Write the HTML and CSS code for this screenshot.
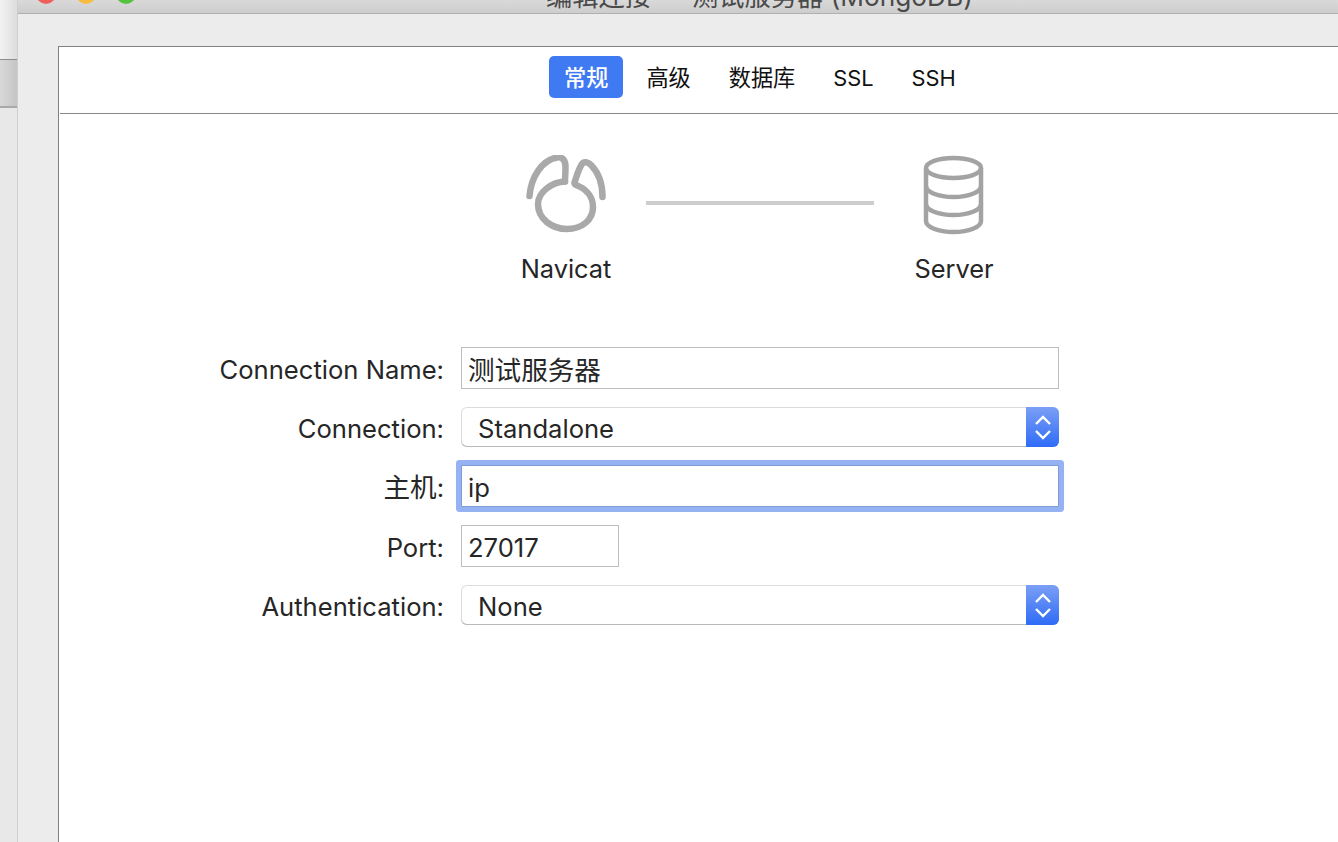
FILE: index.html
```html
<!DOCTYPE html>
<html lang="zh">
<head>
<meta charset="utf-8">
<title>编辑连接 — 测试服务器 (MongoDB)</title>
<link rel="stylesheet" href="styles.css">
</head>
<body>
<div class="desktop">
  <aside class="behind">
    <div class="behind-top"></div>
    <div class="behind-mid"></div>
    <div class="behind-low"></div>
  </aside>
  <div class="window">
    <header class="titlebar">
      <div class="lights">
        <span class="light red"></span>
        <span class="light yellow"></span>
        <span class="light green"></span>
      </div>
      <div class="wintitle">编辑连接 — 测试服务器 (MongoDB)</div>
    </header>
    <div class="body">
      <main class="panel">
        <nav class="tabs">
          <span class="tab active">常规</span>
          <span class="tab">高级</span>
          <span class="tab">数据库</span>
          <span class="tab latin">SSL</span>
          <span class="tab latin">SSH</span>
        </nav>
        <section class="diagram">
          <div class="node node-left">
            <svg class="icon" width="84" height="80" viewBox="0 0 84 80" fill="none" stroke="#a9a9a9" stroke-width="6.5" stroke-linecap="round" stroke-linejoin="round">
              <path d="M5.5 41C7 22 18 5 33 2.5C39 1.5 41.5 6 41.5 12C41.5 18 41 22 41 26.5"/>
              <path d="M41 26.5C28 27 14 37 14 49C14 64 28 74 43 74C58 74 69 65 69 52C69 40 60 33 52 30C50 29 50 28 51 26C53 20 55 13 58 9C60 6 64 7 67 10C73 16 78.5 27 78.5 42"/>
            </svg>
            <div class="node-label">Navicat</div>
          </div>
          <div class="link"></div>
          <div class="node node-right">
            <svg class="icon" width="62" height="80" viewBox="0 0 62 80" fill="none" stroke="#a3a3a3" stroke-width="4.5">
              <ellipse cx="30.5" cy="13" rx="27.5" ry="10"/>
              <path d="M3 13V66C3 72 15 77 30.5 77C46 77 58 72 58 66V13"/>
              <path d="M3 31C3 37 15 42 30.5 42C46 42 58 37 58 31"/>
              <path d="M3 49C3 55 15 60 30.5 60C46 60 58 55 58 49"/>
            </svg>
            <div class="node-label">Server</div>
          </div>
        </section>
        <form class="form">
          <div class="row">
            <label class="label">Connection Name:</label>
            <div class="field full"><span class="cjk">测试服务器</span></div>
          </div>
          <div class="row">
            <label class="label">Connection:</label>
            <div class="select">
              <span class="select-text">Standalone</span>
              <span class="stepper"><svg width="18" height="28" viewBox="0 0 18 28" fill="none" stroke="#fff" stroke-width="2.4"><path d="M2 11L9 4L16 11"/><path d="M2 18L9 25L16 18"/></svg></span>
            </div>
          </div>
          <div class="row">
            <label class="label"><span class="cjk">主机</span>:</label>
            <div class="field full focus">ip</div>
          </div>
          <div class="row">
            <label class="label">Port:</label>
            <div class="field port">27017</div>
          </div>
          <div class="row">
            <label class="label">Authentication:</label>
            <div class="select">
              <span class="select-text">None</span>
              <span class="stepper"><svg width="18" height="28" viewBox="0 0 18 28" fill="none" stroke="#fff" stroke-width="2.4"><path d="M2 11L9 4L16 11"/><path d="M2 18L9 25L16 18"/></svg></span>
            </div>
          </div>
        </form>
      </main>
    </div>
  </div>
</div>
</body>
</html>
```
FILE: styles.css
```css
* { box-sizing: border-box; }
html, body { margin: 0; height: 100%; overflow: hidden; }
body {
  font-family: "Inter", "Noto Sans CJK SC", sans-serif;
  color: #262626;
  background: #ececec;
}
.desktop { display: flex; width: 1338px; height: 842px; }

.behind { width: 18px; flex: none; display: flex; flex-direction: column; background: #e9e9e9; border-right: 1px solid #cfcfcf; }
.behind-top { height: 60px; background: linear-gradient(90deg, #f2f2f2, #dddddd); border-bottom: 1px solid #8d8d8d; }
.behind-mid { height: 48px; background: linear-gradient(90deg, #d9d9d9, #c4c4c4); border-bottom: 2px solid #a9a9a9; }
.behind-low { flex: 1; background: #e8e8e8; }

.window { flex: 1; display: flex; flex-direction: column; min-width: 0; }
.titlebar {
  height: 14px; flex: none; position: relative; overflow: hidden;
  background: linear-gradient(#d9d9d9, #cdcdcd);
  border-bottom: 1px solid #b0b0b0;
}
.lights { display: flex; gap: 20px; padding-left: 18px; margin-top: -16px; }
.light { width: 20px; height: 20px; border-radius: 50%; }
.red { background: #f0605a; }
.yellow { background: #f8bd3c; }
.green { background: #52c23f; }
.wintitle {
  position: absolute; left: 528px; top: -16px;
  font-size: 26.25px; line-height: 26px; color: #4a4a4a; white-space: nowrap;
}

.body { flex: 1; padding: 32px 0 0 40px; min-height: 0; }
.panel { height: 100%; background: #fff; border-top: 1px solid #808080; border-left: 1px solid #808080; }

.tabs {
  height: 67px; display: flex; align-items: flex-start; padding: 9px 0 0 489px;
  border-bottom: 1px solid #8a8a8a; margin-left: 1px;
  font-size: 22.2px; color: #111;
}
.tab { height: 42px; line-height: 44px; padding: 0 15px; border-radius: 5px; margin-right: 8px; }
.active { background: #3f7af3; color: #fff; font-weight: 500; }
.latin { font-size: 21.8px; }

.diagram { display: flex; align-items: flex-start; padding: 41px 0 0 462px; height: 233px; }
.node { width: 90px; display: flex; flex-direction: column; align-items: center; }
.icon { flex: none; }
.node-label { margin-top: 19px; font-size: 25.4px; line-height: 30px; white-space: nowrap; }
.link { width: 228px; height: 4px; margin: 46px 35px 0; background: #cdcdcd; }

.form { display: flex; flex-direction: column; gap: 18.4px; width: 1000px; }
.row { display: flex; align-items: center; height: 41px; }
.label { width: 402px; text-align: right; font-size: 25.6px; line-height: 31px; padding: 3px 17px 0 0; white-space: nowrap; }
.cjk { font-size: 26.6px; }
.field {
  height: 42px; line-height: 44px; padding-left: 6px; font-size: 25.6px;
  background: #fff; border: 1px solid #bdbdbd; white-space: nowrap;
}
.full { width: 598px; }
.port { width: 158px; }
.focus { border-color: #7f9bd4; box-shadow: 0 0 0 5px #95b3f3; border-radius: 1px; }
.select {
  width: 598px; height: 40px; display: flex; align-items: stretch; font-size: 25.6px;
  background: #fff; box-shadow: inset 0 -1px 0 #b9b9b9, inset 0 0 0 1px #dcdcdc; border-radius: 6px; overflow: hidden;
}
.select-text { flex: 1; line-height: 44px; padding-left: 17px; }
.stepper {
  width: 33px; display: flex; align-items: center; justify-content: center;
  background: linear-gradient(#7b9ff5, #2f6bf7);
}
```
